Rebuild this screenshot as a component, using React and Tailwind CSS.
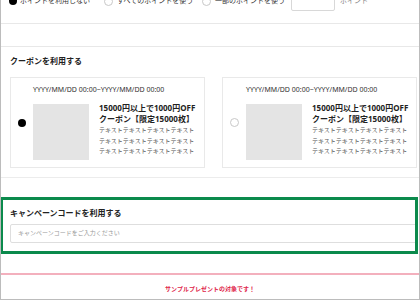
import React from 'react';

const FONT = "font-[family-name:'Noto_Sans','Noto_Sans_CJK_JP',sans-serif]";

const Radio = ({ checked }) =>
    checked ? (
        <span className="w-[8px] h-[8px] shrink-0 rounded-full bg-black" />
    ) : (
        <span className="w-[9px] h-[9px] shrink-0 rounded-full border border-[#c8c8c8] bg-white" />
    );

const CouponCard = ({ checked }) => (
    <div className="w-[195px] h-[91px] shrink-0 border border-[#e9e9e9] flex items-center pl-[7px]">
        <Radio checked={checked} />
        <div className="ml-[7px] flex flex-col">
            <p className="text-[7px] leading-[10px] text-[#333] whitespace-nowrap">
                YYYY/MM/DD 00:00~YYYY/MM/DD 00:00
            </p>
            <div className="flex mt-[9px]">
                <div className="w-[56px] h-[56px] bg-[#e4e4e4]" />
                <div className="ml-[10px] w-[100px] -mt-px">
                    <p className="text-[8px] leading-[10.5px] font-bold text-[#222] whitespace-nowrap">15000円以上で1000円OFF</p>
                    <p className="text-[8px] leading-[10.5px] font-bold text-[#222] whitespace-nowrap">クーポン【限定15000枚】</p>
                    <p className="mt-[1px] text-[6px] leading-[10.5px] text-[#555] whitespace-nowrap">テキストテキストテキストテキスト</p>
                    <p className="text-[6px] leading-[10.5px] text-[#555] whitespace-nowrap">テキストテキストテキストテキスト</p>
                    <p className="text-[6px] leading-[10.5px] text-[#555] whitespace-nowrap">テキストテキストテキストテキスト</p>
                </div>
            </div>
        </div>
    </div>
);

export default function App() {
    return (
        <div className={`w-[420px] h-[300px] overflow-hidden bg-white border-x border-b border-[#bcbcbc] ${FONT}`}>
            {/* Points row (cut at top) */}
            <div className="h-[24px] border-b border-[#e8e8e8]">
                <div className="flex items-center h-[20px] -translate-y-[9px] pl-[8px] text-[7px] text-[#333] whitespace-nowrap">
                    <div className="w-[95px] flex items-center gap-[3px]">
                        <Radio checked />
                        <span>ポイントを利用しない</span>
                    </div>
                    <div className="w-[98px] flex items-center gap-[4px]">
                        <Radio />
                        <span>すべてのポイントを使う</span>
                    </div>
                    <div className="w-[89px] flex items-center gap-[4px]">
                        <Radio />
                        <span>一部のポイントを使う</span>
                    </div>
                    <div className="w-[44px] h-[20px] border border-[#d8d8d8] rounded-[2px]" />
                    <span className="ml-[5px] text-[#888]">ポイント</span>
                </div>
            </div>
            <div className="h-[23px] border-b border-[#e8e8e8]" />

            {/* Coupons */}
            <div className="border-b border-[#ececec] pt-[8px] pb-[9px]">
                <h2 className="pl-[9px] text-[8px] leading-[12px] font-bold text-[#222]">クーポンを利用する</h2>
                <div className="flex gap-[17px] pl-[9px] mt-[10px]">
                    <CouponCard checked />
                    <CouponCard />
                </div>
            </div>

            {/* Campaign code */}
            <div className="-ml-px w-[418px] mt-[19px] border-[3px] border-[#0b8a4c] overflow-hidden pt-[7px] pb-[8px] pl-[7px]">
                <h2 className="text-[8px] leading-[12px] font-bold text-[#222]">キャンペーンコードを利用する</h2>
                <div className="mt-[5px] w-[420px] h-[19px] border border-[#dedede] rounded-[2px] flex items-center pl-[7px]">
                    <span className="text-[6px] text-[#9a9a9a]">キャンペーンコードをご入力ください</span>
                </div>
            </div>

            {/* Sample notice */}
            <div className="mt-[19px] border-t-2 border-[#f3b0bd] pt-[9px] text-center">
                <p className="text-[6px] leading-[10px] font-bold text-[#e0254a]">サンプルプレゼントの対象です！</p>
            </div>
        </div>
    );
}
